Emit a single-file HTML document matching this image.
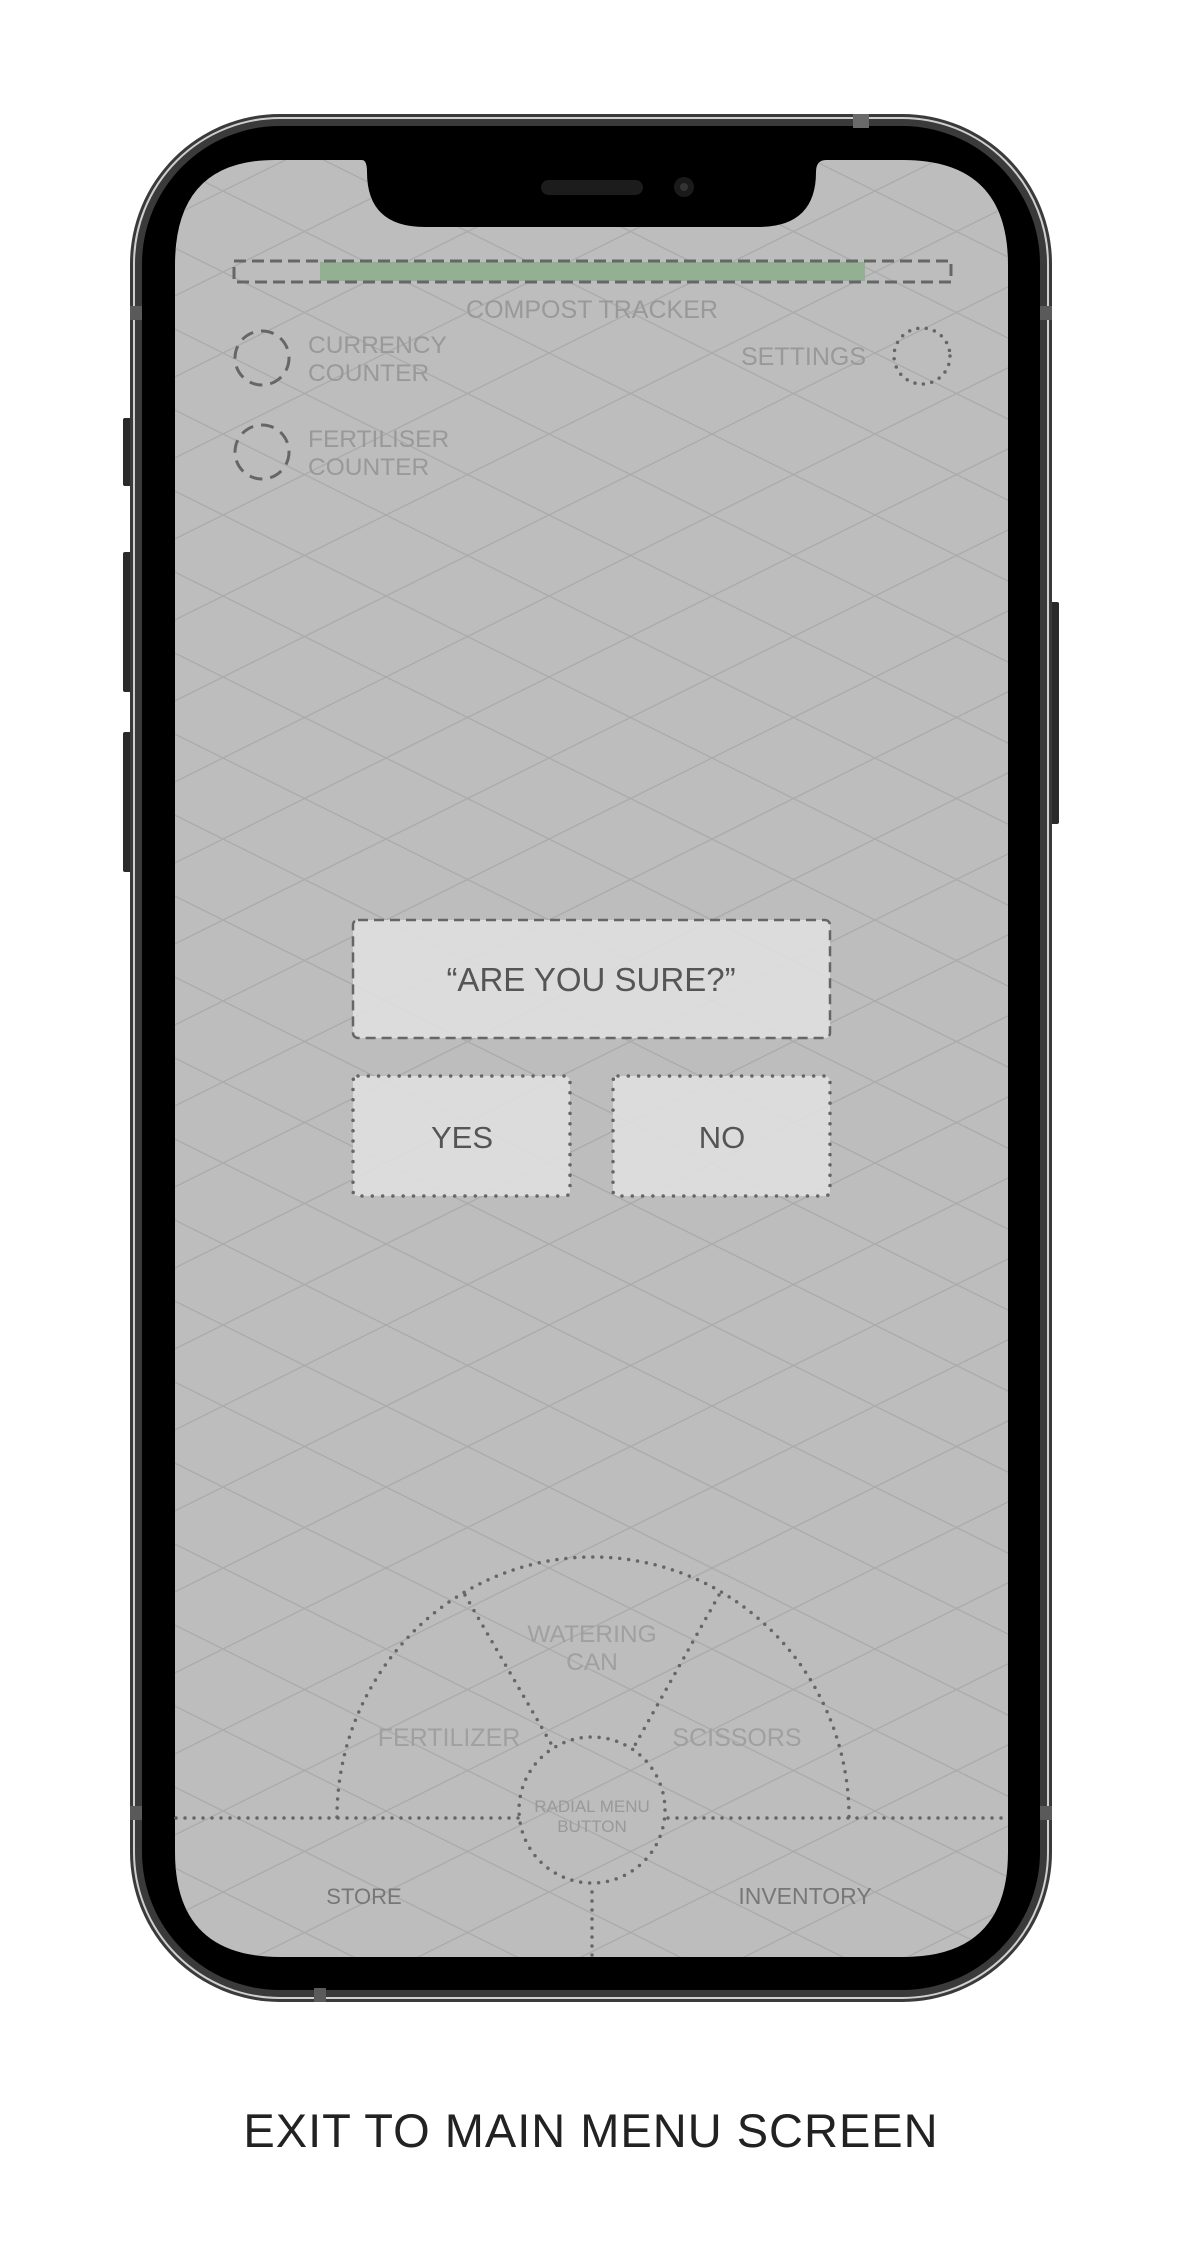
<!DOCTYPE html>
<html><head><meta charset="utf-8"><style>
html,body{margin:0;padding:0;background:#fff;width:1182px;height:2254px;overflow:hidden}
svg{display:block}
text{font-family:"Liberation Sans",sans-serif}
</style></head><body>
<svg width="1182" height="2254" viewBox="0 0 1182 2254" xmlns="http://www.w3.org/2000/svg">
<defs>
<pattern id="grid" patternUnits="userSpaceOnUse" x="60" y="29" width="163" height="81">
<line x1="0" y1="0" x2="163" y2="81" stroke="#ababab" stroke-width="1.4"/>
<line x1="0" y1="81" x2="163" y2="0" stroke="#ababab" stroke-width="1.4"/>
</pattern>
<clipPath id="scr">
<path d="M275 160 H362 Q367 160 367 172 Q367 227 425 227 H758 Q816 227 816 172 Q816 160 826 160 H903 Q1008 160 1008 265 V1852 Q1008 1957 903 1957 H280 Q175 1957 175 1852 V265 Q175 160 275 160 Z"/>
</clipPath>
</defs>
<rect x="123" y="418" width="9" height="68" rx="2" fill="#2a2a2a"/>
<rect x="123" y="552" width="9" height="140" rx="2" fill="#2a2a2a"/>
<rect x="123" y="732" width="9" height="140" rx="2" fill="#2a2a2a"/>
<rect x="1050" y="602" width="9" height="222" rx="2" fill="#2a2a2a"/>
<rect x="130" y="114" width="922" height="1888" rx="150" fill="#3a3a3a"/>
<rect x="134" y="118" width="914" height="1880" rx="146" fill="none" stroke="#cfcfcf" stroke-width="2"/>
<rect x="142" y="126" width="898" height="1864" rx="138" fill="#000"/>
<rect x="853" y="114" width="16" height="14" fill="#6a6a6a"/>
<rect x="130" y="306" width="12" height="14" fill="#5a5a5a"/>
<rect x="1040" y="306" width="12" height="14" fill="#5a5a5a"/>
<rect x="130" y="1806" width="12" height="14" fill="#5a5a5a"/>
<rect x="1040" y="1806" width="12" height="14" fill="#5a5a5a"/>
<rect x="314" y="1988" width="12" height="14" fill="#5a5a5a"/>
<g clip-path="url(#scr)">
<rect x="170" y="150" width="850" height="1820" fill="#bdbdbd"/>
<rect x="170" y="150" width="850" height="1820" fill="url(#grid)"/>
</g>
<rect x="541" y="180" width="102" height="15" rx="7.5" fill="#1c1c1c"/>
<circle cx="684" cy="187" r="10" fill="#1a1a1a"/>
<circle cx="684" cy="187" r="4" fill="#333"/>
<rect x="320" y="262" width="545" height="19" fill="#93b092"/>
<rect x="234" y="261" width="717" height="21" fill="none" stroke="#666" stroke-width="3" stroke-dasharray="12 6"/>
<text x="592" y="318" font-size="25" fill="#999" text-anchor="middle">COMPOST TRACKER</text>
<circle cx="262" cy="358" r="27" fill="none" stroke="#666" stroke-width="3" stroke-dasharray="13 8"/>
<text x="308" y="353" font-size="24.5" fill="#999">CURRENCY</text>
<text x="308" y="381" font-size="24.5" fill="#999">COUNTER</text>
<circle cx="262" cy="452" r="27" fill="none" stroke="#666" stroke-width="3" stroke-dasharray="13 8"/>
<text x="308" y="447" font-size="24.5" fill="#999">FERTILISER</text>
<text x="308" y="475" font-size="24.5" fill="#999">COUNTER</text>
<text x="866" y="365" font-size="25" fill="#999" text-anchor="end">SETTINGS</text>
<circle cx="922" cy="356" r="28" fill="none" stroke="#666" stroke-width="3.5" stroke-linecap="round" stroke-dasharray="0 8.5"/>
<rect x="353" y="920" width="477" height="118" rx="5" fill="#e0e0e0" fill-opacity="0.88" stroke="#666" stroke-width="2.5" stroke-dasharray="10 6"/>
<text x="591" y="991" font-size="33" fill="#555" text-anchor="middle">“ARE YOU SURE?”</text>
<rect x="353" y="1076" width="217" height="120" rx="5" fill="#e0e0e0" fill-opacity="0.88" stroke="#666" stroke-width="3.5" stroke-linecap="round" stroke-dasharray="0 10.3"/>
<text x="462" y="1148" font-size="31" fill="#555" text-anchor="middle">YES</text>
<rect x="613" y="1076" width="217" height="120" rx="5" fill="#e0e0e0" fill-opacity="0.88" stroke="#666" stroke-width="3.5" stroke-linecap="round" stroke-dasharray="0 10.3"/>
<text x="722" y="1148" font-size="31" fill="#555" text-anchor="middle">NO</text>
<g fill="none" stroke="#666" stroke-width="3.5" stroke-linecap="round" stroke-dasharray="0 9">
<path d="M337 1817 A256 260 0 0 1 849 1817"/>
<line x1="176" y1="1818" x2="520" y2="1818"/>
<line x1="668" y1="1818" x2="1008" y2="1818"/>
<line x1="465" y1="1595" x2="553" y2="1747"/>
<line x1="719" y1="1595" x2="635" y2="1745"/>
<circle cx="592" cy="1810" r="73"/>
<line x1="592" y1="1892" x2="592" y2="1957"/>
</g>
<text x="592" y="1642" font-size="24.5" fill="#a0a0a0" text-anchor="middle">WATERING</text>
<text x="592" y="1670" font-size="24.5" fill="#a0a0a0" text-anchor="middle">CAN</text>
<text x="449" y="1746" font-size="25" fill="#a0a0a0" text-anchor="middle">FERTILIZER</text>
<text x="737" y="1746" font-size="25" fill="#a0a0a0" text-anchor="middle">SCISSORS</text>
<text x="592" y="1812" font-size="17" fill="#999" text-anchor="middle">RADIAL MENU</text>
<text x="592" y="1832" font-size="17" fill="#999" text-anchor="middle">BUTTON</text>
<text x="364" y="1904" font-size="22" fill="#777" text-anchor="middle">STORE</text>
<text x="805" y="1904" font-size="23" fill="#777" text-anchor="middle">INVENTORY</text>
<text x="591" y="2147" font-size="47" fill="#222" text-anchor="middle" letter-spacing="1">EXIT TO MAIN MENU SCREEN</text>
</svg>
</body></html>
